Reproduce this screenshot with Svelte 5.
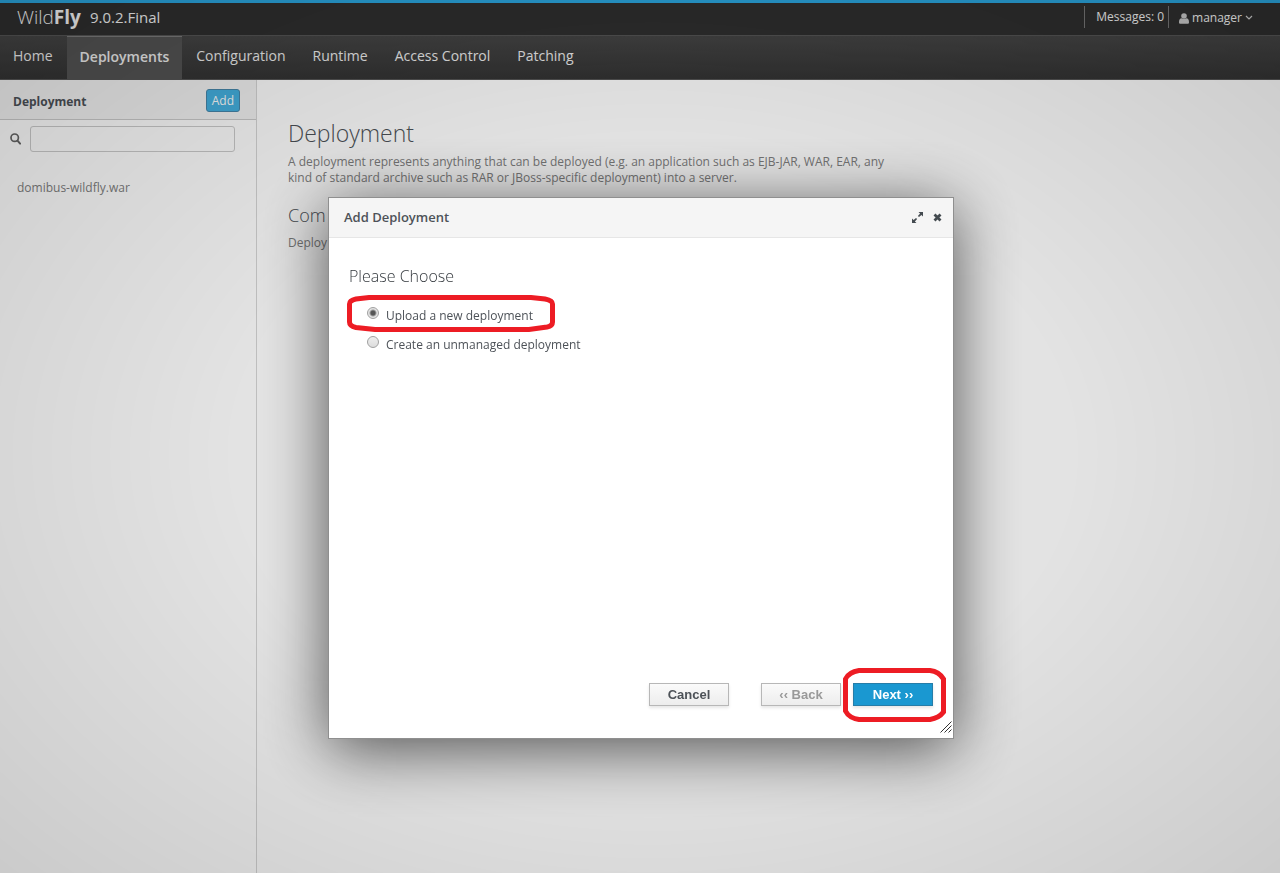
<script>
  const tabs = ['Home', 'Deployments', 'Configuration', 'Runtime', 'Access Control', 'Patching'];
  const options = [
    { id: 'upload', label: 'Upload a new deployment' },
    { id: 'unmanaged', label: 'Create an unmanaged deployment' }
  ];
  let choice = $state('upload');
</script>

<div class="page">
  <header class="top">
    <div class="logo"><span>Wild</span><b>Fly</b></div>
    <span class="version">9.0.2.Final</span>
    <div class="tools">
      <button class="messages">Messages: 0</button>
      <button class="user">
        <svg width="10" height="11" viewBox="0 0 10 11" aria-hidden="true">
          <circle cx="5" cy="3" r="2.8" />
          <path d="M0 9.2C0 6.6 1 5.4 2.6 5.2c1.4 1 3.4 1 4.8 0C9 5.4 10 6.6 10 9.2c0 1-.6 1.6-1.5 1.6h-7C.6 10.8 0 10.2 0 9.2z" />
        </svg>
        manager
        <svg width="8" height="6" viewBox="0 0 8 6" aria-hidden="true">
          <path d="M1 1l3 3 3-3" class="stroke" />
        </svg>
      </button>
    </div>
  </header>

  <nav>
    {#each tabs as tab}
      <a href="#{tab.replace(' ', '-').toLowerCase()}" class:active={tab === 'Deployments'}>{tab}</a>
    {/each}
  </nav>

  <div class="columns">
    <aside>
      <div class="column-head">
        <h2>Deployment</h2>
        <button class="add">Add</button>
      </div>
      <div class="search">
        <label for="filter" aria-label="Filter deployments">
          <svg width="11" height="12" viewBox="0 0 11 12">
            <circle cx="4.7" cy="4.7" r="3.7" fill="none" stroke="#666" stroke-width="1.7" />
            <path d="M7.5 7.7l2.6 2.9" stroke="#666" stroke-width="2" stroke-linecap="round" />
          </svg>
        </label>
        <input id="filter" type="text" />
      </div>
      <a class="item" href="#domibus">domibus-wildfly.war</a>
    </aside>
    <main>
      <h1>Deployment</h1>
      <p>A deployment represents anything that can be deployed (e.g. an application such as EJB-JAR, WAR, EAR, any kind of standard archive such as RAR or JBoss-specific deployment) into a server.</p>
      <h3>Com</h3>
      <p>Deploy</p>
    </main>
  </div>
</div>

<div class="glass">
  <div class="dialog" role="dialog" aria-labelledby="dialog-title">
    <div class="dialog-head">
      <h2 id="dialog-title">Add Deployment</h2>
      <button aria-label="Maximize">
        <svg width="11" height="11" viewBox="0 0 11 11">
          <path d="M6.5 0H11v4.5L9.4 2.9 7 5.1 5.9 4 8.1 1.6zM4.5 11H0V6.5L1.6 8.1 4 5.9 5.1 7 2.9 9.4z" fill="#444b50" />
        </svg>
      </button>
      <button aria-label="Close">
        <svg width="9" height="9" viewBox="0 0 9 9">
          <path d="M1.500 1.500l6 6M7.500 1.500l-6 6" stroke="#444b50" stroke-width="2.800" />
        </svg>
      </button>
    </div>
    <div class="dialog-body">
      <h3>Please Choose</h3>
      {#each options as option}
        <div class="option">
          <input type="radio" id={option.id} name="kind" value={option.id} bind:group={choice} />
          <label for={option.id}>{option.label}</label>
          {#if option.id === 'upload'}
            <svg class="ring" width="208" height="37" viewBox="0 0 208 37" aria-hidden="true">
              <path d="M22 2.500H184L198 4Q205.500 5.500 205.500 9V27Q205.500 31 200 32L182 34.500H28L9 32.500Q2.500 31 2.500 27V9Q2.500 5.500 9 4Z" />
            </svg>
          {/if}
        </div>
      {/each}
    </div>
    <div class="dialog-foot">
      <button class="cancel">Cancel</button>
      <button class="back" disabled>‹‹ Back</button>
      <div class="next-wrap">
        <button class="next">Next ››</button>
        <svg class="ring" width="103" height="54" viewBox="0 0 103 54" aria-hidden="true">
          <path d="M16 2.500H87Q96 3.500 100.500 11V44Q96 50 87 51.500H16Q6 50 2.500 43V11Q6 4 16 2.500Z" />
        </svg>
      </div>
    </div>
    <svg class="grip" width="12" height="12" viewBox="0 0 12 12" aria-hidden="true">
      <path d="M.5 11.500l11-11M4.500 11.500l7-7M8.500 11.500l3-3" />
    </svg>
  </div>
</div>

<style>
  :global(body) {
    margin: 0;
    font-family: 'Open Sans', sans-serif;
    font-size: 12px;
    line-height: 16px;
    color: #4d5258;
  }
  button {
    font: inherit;
    color: inherit;
    border: 0;
    padding: 0;
    background: none;
  }
  h1, h2, h3, p {
    margin: 0;
  }
  a {
    color: inherit;
    text-decoration: none;
  }
  .page {
    min-height: 100vh;
    display: flex;
    flex-direction: column;
    background: #fff;
  }
  .top {
    box-sizing: border-box;
    height: 35px;
    border-top: 3px solid #2ba6df;
    background: #2f2f2f;
    color: #f4f4f4;
    display: flex;
    align-items: center;
    padding: 0 27px 4px 17px;
  }
  .logo {
    font-size: 19px;
    font-weight: 300;
    line-height: 24px;
  }
  .logo b {
    font-weight: 700;
  }
  .version {
    font-size: 15px;
    margin-left: 9px;
    flex: 1;
  }
  .tools {
    display: flex;
    font-size: 12px;
    line-height: 20px;
  }
  .messages {
    border: solid #777;
    border-width: 0 1px;
    padding: 0 4px 0 11px;
  }
  .user {
    display: flex;
    align-items: center;
    gap: 3px;
    margin-left: 10px;
    padding-top: 2px;
  }
  .user svg {
    fill: #ccc;
  }
  .user .stroke {
    fill: none;
    stroke: #ccc;
    stroke-width: 1.2;
  }
  nav {
    box-sizing: border-box;
    height: 45px;
    display: flex;
    gap: 1px;
    border-top: 1px solid #555;
    border-bottom: 1px solid #555;
    background: linear-gradient(#454545, #343434);
    color: #eee;
    font-size: 14px;
    line-height: 40px;
  }
  nav a {
    padding: 0 13px;
  }
  nav .active {
    font-weight: 600;
    background: #545454;
    border-top: 1px solid #7c7c7c;
  }
  .columns {
    flex: 1;
    display: flex;
  }
  aside {
    width: 256px;
    border-right: 1px solid #d6d6d6;
  }
  .column-head {
    box-sizing: border-box;
    height: 40px;
    padding: 2px 16px 0 13px;
    display: flex;
    align-items: center;
    justify-content: space-between;
    background: #f3f3f3;
    border-bottom: 1px solid #ccc;
  }
  .column-head h2 {
    font-size: 12px;
    font-weight: 700;
    padding-top: 2px;
  }
  .add {
    box-sizing: border-box;
    height: 23px;
    padding: 0 5px;
    border: 1px solid #4787ab;
    border-radius: 3px;
    background: #45b1e1;
    color: #fff;
  }
  .search {
    display: flex;
    align-items: center;
    gap: 9px;
    padding: 6px 21px 0 10px;
  }
  .search label {
    display: flex;
  }
  .search input {
    box-sizing: border-box;
    flex: 1;
    min-width: 0;
    height: 26px;
    border: 1px solid #ccc;
    border-radius: 3px;
    background: transparent;
  }
  .item {
    display: block;
    padding: 28px 17px;
    color: #808080;
  }
  main {
    flex: 1;
    padding: 38px 31px;
    color: #808080;
  }
  main h1 {
    font-size: 23px;
    line-height: 30px;
    font-weight: 300;
    color: #4d5258;
    margin-bottom: 6px;
  }
  main h3 {
    font-size: 18px;
    line-height: 24px;
    font-weight: 300;
    color: #4d5258;
    margin: 17px 0 8px;
  }
  main p {
    max-width: 600px;
  }
  .glass {
    position: fixed;
    inset: 0;
    display: flex;
    justify-content: center;
    align-items: flex-start;
    padding: 197px 0 0 2px;
    background: radial-gradient(ellipse farthest-corner at 51% 52%, rgba(0, 0, 0, 0.11) 45%, rgba(0, 0, 0, 0.21));
  }
  .dialog {
    position: relative;
    width: 624px;
    border: 1px solid #8f8f8f;
    background: #fff;
    box-shadow: 0 10px 60px rgba(0, 0, 0, 0.65);
  }
  .dialog-head {
    display: flex;
    align-items: center;
    gap: 10px;
    height: 39px;
    padding: 0 11px 0 15px;
    background: #f5f5f5;
    border-bottom: 1px solid #e6e6e6;
  }
  .dialog-head h2 {
    flex: 1;
    font-size: 13px;
    font-weight: 600;
    padding-bottom: 2px;
  }
  .dialog-head button {
    display: flex;
  }
  .dialog-body {
    min-height: 417px;
    padding: 28px 20px 0;
  }
  .dialog-body h3 {
    font-size: 16px;
    line-height: 20px;
    font-weight: 300;
    color: #33383d;
    margin-bottom: 16px;
  }
  .option {
    position: relative;
    display: flex;
    gap: 7px;
    height: 29px;
    padding-left: 18px;
  }
  .option label {
    padding-top: 6px;
  }
  .option input {
    appearance: none;
    box-sizing: border-box;
    width: 12px;
    height: 12px;
    margin: 5px 0 0;
    border: 1px solid #a0a0a0;
    border-radius: 50%;
    background: linear-gradient(#eee, #ddd);
  }
  .option input:checked {
    background: radial-gradient(circle, #555 0 2px, #e4e4e4 4px);
  }
  .ring {
    position: absolute;
    fill: none;
    stroke: #ed1c24;
    stroke-width: 5;
    pointer-events: none;
  }
  .option .ring {
    left: -2px;
    top: -7px;
  }
  .dialog-foot {
    display: flex;
    justify-content: flex-end;
    padding: 0 20px 32px;
    font: bold 13px/20px 'Liberation Sans', sans-serif;
  }
  .dialog-foot button {
    box-sizing: border-box;
    width: 80px;
    height: 23px;
    border: 1px solid #b7b7b7;
    background: linear-gradient(#fafafa, #ededed);
    box-shadow: 0 2px 3px rgba(0, 0, 0, 0.1);
  }
  .dialog-foot .cancel {
    margin-right: 32px;
  }
  .dialog-foot .back {
    color: #999;
    margin-right: 12px;
  }
  .next-wrap {
    position: relative;
  }
  .dialog-foot .next {
    color: #fff;
    border-color: #267da8;
    background: #1a98d1;
  }
  .next-wrap .ring {
    left: -10px;
    top: -15px;
  }
  .grip {
    position: absolute;
    right: 1px;
    bottom: 5px;
    stroke: #333;
    stroke-width: 1;
  }
</style>
